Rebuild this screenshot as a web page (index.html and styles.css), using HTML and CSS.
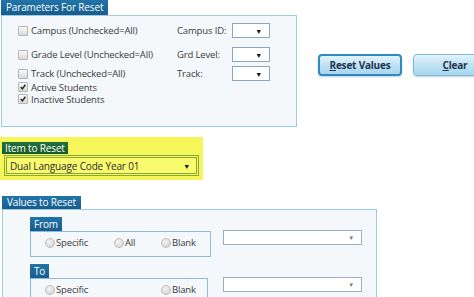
FILE: index.html
```html
<!DOCTYPE html>
<html lang="en">
<head>
  <meta charset="UTF-8">
  <title>Reset Values</title>
  <link rel="stylesheet" href="styles.css">
</head>
<body>
  <div class="page">

    <!-- Parameters -->
    <div class="top">
      <div class="params">
        <div class="tab blue">Parameters For Reset</div>
        <div class="panel params-box">
          <div class="prow r1">
            <label class="check"><span class="cb"></span>Campus (Unchecked=All)</label>
            <span class="plabel">Campus ID:</span>
            <span class="sel small"><span class="arrow">&#9660;</span></span>
          </div>
          <div class="prow r2">
            <label class="check"><span class="cb"></span>Grade Level (Unchecked=All)</label>
            <span class="plabel">Grd Level:</span>
            <span class="sel small"><span class="arrow">&#9660;</span></span>
          </div>
          <div class="prow r3">
            <label class="check"><span class="cb"></span>Track (Unchecked=All)</label>
            <span class="plabel">Track:</span>
            <span class="sel small"><span class="arrow">&#9660;</span></span>
          </div>
          <div class="prow r4">
            <label class="check"><span class="cb on"><svg viewBox="0 0 9 9"><path d="M2 4.6 L3.8 6.6 L7.2 2" fill="none" stroke="#222" stroke-width="1.6"/></svg></span>Active Students</label>
          </div>
          <div class="prow r5">
            <label class="check"><span class="cb on"><svg viewBox="0 0 9 9"><path d="M2 4.6 L3.8 6.6 L7.2 2" fill="none" stroke="#222" stroke-width="1.6"/></svg></span>Inactive Students</label>
          </div>
        </div>
      </div>

      <div class="buttons">
        <button class="btn focused"><u>R</u>eset Values</button>
        <button class="btn"><u>C</u>lear</button>
      </div>
    </div>

    <!-- Item to reset -->
    <div class="item">
      <div class="tab green">Item to Reset</div>
      <div class="item-sel">
        <div class="item-inner">Dual Language Code Year 01<span class="arrow">&#9660;</span></div>
      </div>
    </div>

    <!-- Values -->
    <div class="values">
      <div class="tab blue">Values to Reset</div>
      <div class="panel values-box">
        <div class="vrow">
          <div class="group">
            <div class="tab blue sub">From</div>
            <div class="gbox">
              <span class="radio r-spec"><span class="rd"></span>Specific</span>
              <span class="radio r-all"><span class="rd"></span>All</span>
              <span class="radio r-blank"><span class="rd"></span>Blank</span>
            </div>
          </div>
          <span class="sel wide"><span class="arrow light">&#9660;</span></span>
        </div>
        <div class="vrow to">
          <div class="group">
            <div class="tab blue sub">To</div>
            <div class="gbox short">
              <span class="radio r-spec"><span class="rd"></span>Specific</span>
              <span class="radio r-blank"><span class="rd"></span>Blank</span>
            </div>
          </div>
          <span class="sel wide"><span class="arrow light">&#9660;</span></span>
        </div>
      </div>
    </div>

  </div>
</body>
</html>
```

FILE: styles.css
```css
body {
  margin: 0;
  background: #fff;
  font-family: "Open Sans", "Noto Sans", sans-serif;
  font-size: 9.5px;
  letter-spacing: -0.15px;
  color: #3a3a3a;
  overflow: hidden;
}

.page {
  display: flex;
  flex-direction: column;
  width: 474px;
}

/* Tabs */
.tab {
  align-self: flex-start;
  white-space: nowrap;
  color: #fff;
  padding: 0 5px;
  line-height: 15px;
  height: 15px;
  font-size: 10px;
}

.tab.blue {
  background: linear-gradient(#2174aa, #175d8c);
}

.tab.green {
  background: linear-gradient(#23703a, #185a2b);
  height: 12px;
  line-height: 12px;
  padding: 0 3px;
}

.panel {
  border: 1px solid #9ecbe3;
  background: #f5f8fb;
  box-sizing: border-box;
}

/* Top section */
.top {
  display: flex;
  align-items: flex-start;
}

.params {
  display: flex;
  flex-direction: column;
  margin-left: 1px;
}

.params-box {
  width: 296px;
  height: 112px;
  padding-left: 16px;
}

.prow {
  display: flex;
  align-items: center;
  height: 15px;
}

.prow.r1 { margin-top: 7px; }
.prow.r2 { margin-top: 9px; }
.prow.r3 { margin-top: 4px; }
.prow.r4 { height: 12px; margin-top: 0; }
.prow.r5 { height: 12px; }

.check {
  display: flex;
  align-items: center;
  width: 159px;
  white-space: nowrap;
}

.cb {
  width: 8px;
  height: 8px;
  border: 1px solid #b5b5b5;
  border-radius: 1px;
  background: linear-gradient(#fafafa, #d9d9d9);
  margin-right: 3px;
  display: flex;
}

.cb svg {
  width: 8px;
  height: 8px;
}

.plabel {
  width: 55px;
}

/* Select-like boxes */
.sel {
  position: relative;
  display: block;
  flex-shrink: 0;
  background: #fff;
  border: 1px solid #8aa7bf;
  box-sizing: border-box;
}

.sel.small {
  width: 38px;
  height: 15px;
}

.arrow {
  position: absolute;
  right: 7px;
  top: 50%;
  transform: translateY(-50%);
  font-size: 7px;
  color: #111;
}

.arrow.light {
  color: #777;
  font-size: 6px;
}

/* Buttons */
.buttons {
  display: flex;
  gap: 11px;
  margin-top: 54px;
  margin-left: 21px;
}

.btn {
  flex-shrink: 0;
  width: 84px;
  height: 22px;
  font-family: inherit;
  font-size: 10px;
  letter-spacing: -0.2px;
  font-weight: bold;
  color: #1f3550;
  border: 1px solid #7fb7d9;
  border-radius: 4px;
  background: linear-gradient(#e3f3fb, #bfe2f4 50%, #a8d6ee);
  box-shadow: 0 1px 2px rgba(0, 80, 130, 0.25);
  padding: 0;
}

.btn.focused {
  border: 2px solid #2f8ac0;
}

/* Item to reset */
.item {
  display: flex;
  flex-direction: column;
  width: 203px;
  height: 43px;
  margin-top: 10px;
  box-sizing: border-box;
  padding: 5px 4px 0 2px;
  background: #f6f65a;
}

.item-sel {
  margin-top: 1px;
  margin-left: 2px;
  border: 1px solid #86a93c;
  padding: 1px;
}

.item-inner {
  position: relative;
  height: 17px;
  line-height: 17px;
  box-sizing: border-box;
  border: 1px solid #86a93c;
  padding-left: 3px;
  font-size: 10px;
  color: #2d2d2d;
  background: #fafa6e;
}

.item-inner .arrow {
  right: 6px;
}

/* Values to reset */
.values {
  display: flex;
  flex-direction: column;
  margin-top: 16px;
  margin-left: 2px;
}

.values > .tab {
  line-height: 13px;
  height: 13px;
}

.values-box {
  width: 375px;
  height: 120px;
  padding-left: 27px;
  padding-top: 7px;
}

.vrow {
  display: flex;
  align-items: flex-start;
}

.vrow.to {
  margin-top: 7px;
}

.group {
  display: flex;
  flex-direction: column;
  width: 181px;
}

.tab.sub {
  height: 14px;
  line-height: 14px;
  padding: 0 4px;
}

.gbox {
  position: relative;
  height: 26px;
  border: 1px solid #8bbbd8;
  box-sizing: border-box;
}

.gbox.short {
  width: 178px;
}

.radio {
  position: absolute;
  top: 4px;
  display: flex;
  align-items: center;
}

.rd {
  width: 8px;
  height: 8px;
  border-radius: 50%;
  border: 1px solid #bdbdbd;
  background: radial-gradient(circle at 40% 35%, #f4f4f4, #cfcfcf);
  margin-right: 1px;
}

.r-spec { left: 14px; }
.r-all { left: 83px; }
.r-blank { left: 130px; }

.sel.wide {
  width: 139px;
  height: 15px;
  margin-left: 12px;
  margin-top: 13px;
  border-color: #9ab0c2;
}
```
